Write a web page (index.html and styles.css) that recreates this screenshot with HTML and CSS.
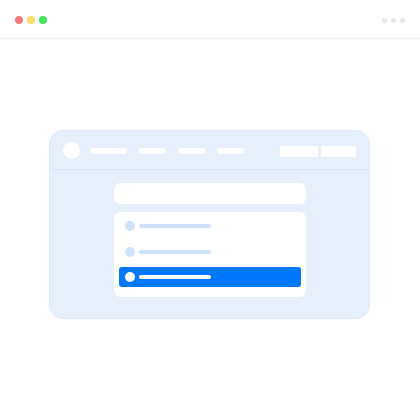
FILE: index.html
```html
<!DOCTYPE html>
<html lang="en">
<head>
  <meta charset="UTF-8">
  <meta name="viewport" content="width=device-width, initial-scale=1.0">
  <title>Dropdown Preview</title>
  <link rel="stylesheet" href="styles.css">
</head>
<body>
  <div class="window-bar">
    <div class="traffic">
      <span class="light red"></span>
      <span class="light yellow"></span>
      <span class="light green"></span>
    </div>
    <div class="more">
      <span></span>
      <span></span>
      <span></span>
    </div>
  </div>

  <div class="stage">
    <div class="mock-card">
      <div class="mock-header">
        <span class="logo"></span>
        <nav class="nav">
          <span class="nav-link wide"></span>
          <span class="nav-link"></span>
          <span class="nav-link"></span>
          <span class="nav-link"></span>
        </nav>
        <div class="actions">
          <span class="action"></span>
          <span class="action small"></span>
        </div>
      </div>
      <div class="mock-body">
        <div class="search-box"></div>
        <ul class="options">
          <li class="option"><span class="dot"></span><span class="line"></span></li>
          <li class="option"><span class="dot"></span><span class="line"></span></li>
          <li class="option selected"><span class="dot"></span><span class="line"></span></li>
        </ul>
      </div>
    </div>
  </div>
</body>
</html>
```

FILE: styles.css
```css
:root {
  --blue: #0077ff;
  --card-bg: #e6f0fd;
  --card-border: #dde9fb;
  --card-line: #d6e6fb;
  --soft: #cfe2fb;
}

* {
  margin: 0;
  padding: 0;
  box-sizing: border-box;
}

body {
  width: 420px;
  height: 420px;
  background: #ffffff;
  font-family: 'Inter', Arial, sans-serif;
  overflow: hidden;
}

.window-bar {
  height: 39px;
  padding: 16px 15px 0;
  display: flex;
  justify-content: space-between;
  align-items: flex-start;
  border-bottom: 1px solid #eeeeee;
}

.traffic {
  display: flex;
  gap: 4px;
}

.light {
  width: 8px;
  height: 8px;
  border-radius: 50%;
}

.red { background: #ff7b7b; }
.yellow { background: #ffdd66; }
.green { background: #3ee65a; }

.more {
  display: flex;
  gap: 4px;
  padding-top: 1.5px;
}

.more span {
  width: 5px;
  height: 5px;
  border-radius: 50%;
  background: #e6e6e6;
}

.stage {
  padding-top: 91px;
}

.mock-card {
  width: 321px;
  height: 189px;
  margin: 0 0 0 49px;
  background: var(--card-bg);
  border: 1px solid var(--card-border);
  border-radius: 14px;
  overflow: hidden;
}

.mock-header {
  height: 39px;
  padding: 0 13px;
  display: flex;
  align-items: center;
  border-bottom: 1px solid var(--card-line);
}

.logo {
  width: 17px;
  height: 17px;
  border-radius: 50%;
  background: #ffffff;
  margin-top: 1px;
}

.nav {
  display: flex;
  gap: 12px;
  margin-left: 10px;
  margin-top: 2px;
}

.nav-link {
  width: 27px;
  height: 6px;
  border-radius: 3px;
  background: #ffffff;
}

.nav-link.wide {
  width: 37px;
}

.actions {
  margin-left: auto;
  display: flex;
  gap: 3px;
  margin-top: 2px;
}

.action {
  width: 38px;
  height: 11px;
  border-radius: 1px;
  background: #ffffff;
}

.action.small {
  width: 35px;
}

.mock-body {
  padding-top: 13px;
  display: flex;
  flex-direction: column;
  align-items: center;
  gap: 8px;
}

.search-box {
  width: 192px;
  height: 21px;
  border-radius: 6px;
  background: #ffffff;
}

.options {
  list-style: none;
  width: 192px;
  height: 85px;
  padding: 4px 5px 10px;
  border-radius: 6px;
  background: #ffffff;
  display: flex;
  flex-direction: column;
  gap: 5.5px;
}

.option {
  height: 20px;
  padding-left: 6px;
  display: flex;
  align-items: center;
  gap: 4px;
  border-radius: 3px;
}

.dot {
  width: 10px;
  height: 10px;
  border-radius: 50%;
  background: var(--soft);
}

.line {
  width: 72px;
  height: 4px;
  border-radius: 2px;
  background: var(--soft);
}

.option.selected {
  background: var(--blue);
}

.option.selected .dot,
.option.selected .line {
  background: #ffffff;
}
```
